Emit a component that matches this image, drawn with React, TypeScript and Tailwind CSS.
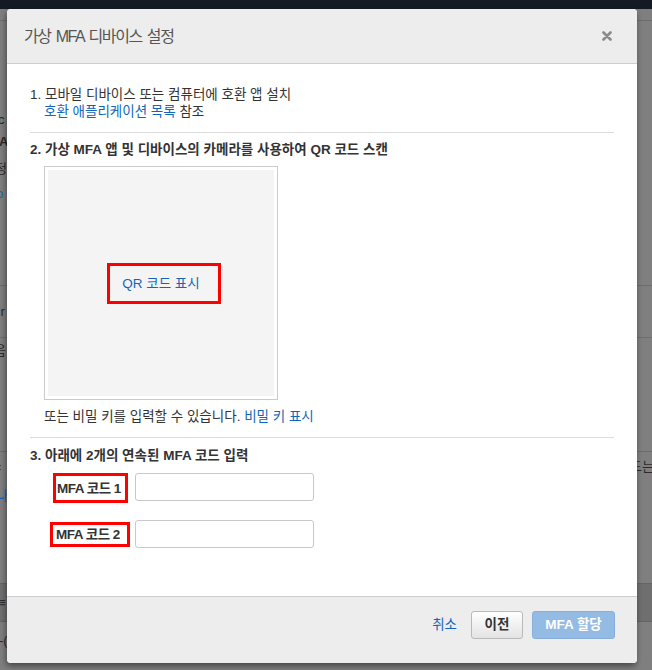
import { useState } from "react";

const font = "font-['Liberation_Sans','Noto_Sans_CJK_KR',sans-serif]";

export default function App() {
  const [code1, setCode1] = useState("");
  const [code2, setCode2] = useState("");

  return (
    <div className={`relative h-[670px] w-full overflow-hidden bg-[#7f7f7f] ${font}`}>
      <Backdrop />

      {/* modal */}
      <div className="absolute left-[7px] top-[9px] flex w-[630px] flex-col rounded-[4px] bg-white shadow-[-1px_3px_6px_rgba(0,0,0,0.45)]">
        <div className="flex h-[55px] items-center justify-between rounded-t-[4px] border-b border-[#cdcdcd] bg-[#ededed] pl-[17px] pr-[23px]">
          <h2 className="pt-[2px] text-[16px] leading-[20px] tracking-[-1.4px] text-[#555] [word-spacing:2px]">가상 MFA 디바이스 설정</h2>
          <button className="flex h-[14px] w-[14px] items-center justify-center">
            <svg width="10" height="10" viewBox="0 0 10 10">
              <path d="M1.5 1.5 L8.5 8.5 M8.5 1.5 L1.5 8.5" stroke="#8a8a8a" strokeWidth="2.6" strokeLinecap="round" />
            </svg>
          </button>
        </div>

        <div className="flex h-[532px] flex-col px-[23px] pt-[22px] text-[13.5px] leading-[17px] text-[#333]">
          <p>1. 모바일 디바이스 또는 컴퓨터에 호환 앱 설치</p>
          <p className="pl-[14px]">
            <a className="text-[#1166bb]">호환 애플리케이션 목록</a> 참조
          </p>

          <div className="mt-[12px] border-t border-[#dddddd]" />

          <p className="mt-[8px] font-bold">2. 가상 MFA 앱 및 디바이스의 카메라를 사용하여 QR 코드 스캔</p>
          <div className="ml-[14px] mt-[8px] h-[234px] w-[234px] border border-[#cccccc] p-[3px]">
            <div className="flex h-full w-full items-center justify-center bg-[#f4f4f4] pl-[6px]">
              <div className="flex h-[41px] items-center border-[3px] border-[#ff0000] pl-[12px] pr-[18px]">
                <a className="text-[#1166bb]">QR 코드 표시</a>
              </div>
            </div>
          </div>
          <p className="ml-[14px] mt-[8px]">
            또는 비밀 키를 입력할 수 있습니다. <a className="text-[#1166bb]">비밀 키 표시</a>
          </p>

          <div className="mt-[12px] border-t border-[#dddddd]" />

          <p className="mt-[9px] font-bold">3. 아래에 2개의 연속된 MFA 코드 입력</p>

          <div className="mt-[9px] flex items-start">
            <div className="w-[105px] pl-[23px]">
              <div className="flex h-[30px] w-[75px] items-center border-[3px] border-[#ff0000] pl-[1px] font-bold tracking-[-0.5px]">
                MFA 코드 1
              </div>
            </div>
            <input
              value={code1}
              onChange={(e) => setCode1(e.target.value)}
              className="h-[28px] w-[179px] rounded-[3px] border border-[#c8c8c8] px-2 outline-none"
            />
          </div>

          <div className="mt-[17px] flex items-start">
            <div className="w-[105px] pl-[20px] pt-[2px]">
              <div className="flex h-[25px] w-[80px] items-center border-[3px] border-[#ff0000] pl-[3px] font-bold tracking-[-0.5px]">
                MFA 코드 2
              </div>
            </div>
            <input
              value={code2}
              onChange={(e) => setCode2(e.target.value)}
              className="h-[28px] w-[179px] rounded-[3px] border border-[#c8c8c8] px-2 outline-none"
            />
          </div>
        </div>

        <div className="flex h-[67px] items-start justify-end gap-[9px] rounded-b-[4px] border-t border-[#cdcdcd] bg-[#ededed] pr-[22px] pt-[14px] text-[13.5px]">
          <a className="mr-[5px] mt-[5px] leading-[17px] text-[#1166bb]">취소</a>
          <button className="h-[28px] w-[52px] rounded-[3px] border border-[#b9b9b9] bg-gradient-to-b from-white to-[#e3e3e3] font-bold text-[#333]">
            이전
          </button>
          <button className="h-[28px] w-[83px] rounded-[3px] border border-[#88afdc] bg-[#94bbe3] font-bold text-white">
            MFA 할당
          </button>
        </div>
      </div>
    </div>
  );
}

// page behind the dimmed overlay, only slivers show
function Backdrop() {
  return (
    <div className="flex flex-col text-[13px] leading-[17px] text-[#2a2a2a]">
      <div className="h-[9px] bg-[#131a23]" />
      <div className="h-[12px] border-b border-[#6d6d6d]" />
      <div className="flex h-[265px] flex-col border-b border-[#6d6d6d] pt-[90px]">
        <span className="-ml-[2px]">c</span>
        <span className="-ml-[1px] mt-[5px] font-bold">A</span>
        <span className="-ml-[5px] mt-[10px]">정</span>
        <span className="-ml-[4px] mt-[8px] text-[#1166bb]">o</span>
      </div>
      <div className="flex h-[52px] items-center border-b border-[#6d6d6d]">
        <span className="-ml-[3px]">ır</span>
      </div>
      <div className="flex h-[114px] flex-col border-b border-[#6d6d6d] pt-[4px]">
        <span className="-ml-[6px]">음</span>
      </div>
      <div className="flex h-[131px] flex-col pt-[6px]">
        <div className="flex justify-between">
          <span className="-ml-[3px]">‹</span>
          <span className="-mr-[2px]">드는</span>
        </div>
        <span className="-ml-[4px] mt-[12px] text-[#1166bb]">나</span>
        <span className="-ml-[4px] text-[#b22222]">"</span>
      </div>
      <div className="flex h-[39px] items-center border-y border-[#656565] bg-[#6f6f6f]">
        <span className="-ml-[2px]">≡</span>
      </div>
      <div className="flex h-[48px] items-start pt-[10px]">
        <span className="-ml-[1px]">-(</span>
      </div>
    </div>
  );
}
